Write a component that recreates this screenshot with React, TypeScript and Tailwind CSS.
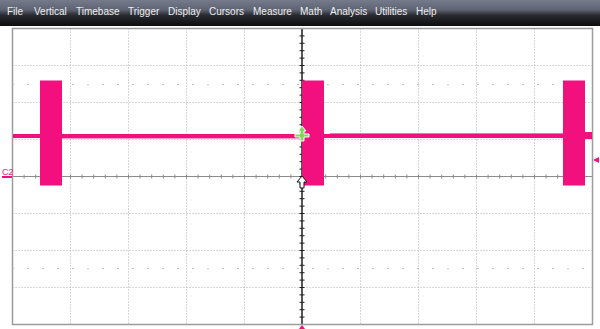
const MENU: [string, number][] = [
  ["File", 27],
  ["Vertical", 42],
  ["Timebase", 52],
  ["Trigger", 40],
  ["Display", 41],
  ["Cursors", 44],
  ["Measure", 47],
  ["Math", 30],
  ["Analysis", 45],
  ["Utilities", 41],
  ["Help", 40],
];

const PINK = "#f2107e";

// graticule: 10 x 8 divisions, 58 x 37 px
const X0 = 12.5;
const Y0 = 28.5;
const DX = 58;
const DY = 37;

function Graticule() {
  const vlines = Array.from({ length: 9 }, (_, i) => X0 + DX * (i + 1)).filter((_, i) => i !== 4);
  const hlines = Array.from({ length: 7 }, (_, i) => Y0 + DY * (i + 1)).filter((_, i) => i !== 3);
  const cx = X0 + DX * 5 - 0.5;
  const cy = Y0 + DY * 4;
  const xticks = Array.from({ length: 51 }, (_, i) => X0 + (DX / 5) * i);
  const yticks = Array.from({ length: 41 }, (_, i) => Y0 + (DY / 5) * i);
  return (
    <g>
      {vlines.map((x) => (
        <line key={"v" + x} x1={x} y1={Y0} x2={x} y2={Y0 + DY * 8} stroke="#b0b0b0" strokeWidth={1} strokeDasharray="1 2" />
      ))}
      {hlines.map((y) => (
        <line key={"h" + y} x1={X0} y1={y} x2={X0 + DX * 10} y2={y} stroke="#b0b0b0" strokeWidth={1} strokeDasharray="1 2" />
      ))}
      {/* faint mid rows */}
      <line x1={X0} y1={84.5} x2={X0 + DX * 10} y2={84.5} stroke="#8a8a8a" strokeWidth={1} strokeDasharray="1 14" />
      <line x1={X0} y1={268.5} x2={X0 + DX * 10} y2={268.5} stroke="#8a8a8a" strokeWidth={1} strokeDasharray="1 14" />

      {/* centre axes */}
      <line x1={X0} y1={cy} x2={X0 + DX * 10} y2={cy} stroke="#8c8c8c" strokeWidth={1} />
      {xticks.map((x) => (
        <line key={"xt" + x} x1={x} y1={cy - 2} x2={x} y2={cy + 2} stroke="#8c8c8c" strokeWidth={1} />
      ))}
      <line x1={cx} y1={Y0} x2={cx} y2={Y0 + DY * 8} stroke="#1e1e1e" strokeWidth={1.5} />
      {yticks.map((y) => (
        <line key={"yt" + y} x1={cx - 2.5} y1={y} x2={cx + 2.5} y2={y} stroke="#1e1e1e" strokeWidth={1} />
      ))}

      {/* frame */}
      <rect x={X0} y={Y0} width={DX * 10} height={DY * 8} fill="none" stroke="#9c9c9c" strokeWidth={1.5} />
    </g>
  );
}

function Trace() {
  const bursts = [40, 302, 563];
  return (
    <g fill={PINK}>
      <rect x={13} y={134} width={579} height={4} />
      {/* slight noise on the baseline */}
      <rect x={330} y={133} width={255} height={1} opacity={0.6} />
      <rect x={62} y={138} width={240} height={1} opacity={0.4} />
      <rect x={585} y={132} width={7} height={7} />
      {bursts.map((x) => (
        <rect key={x} x={x} y={80.5} width={22} height={105} />
      ))}
    </g>
  );
}

function Markers() {
  return (
    <g>
      {/* right-side offset marker */}
      <polygon points="593,160 599,157 599,163" fill={PINK} />
      {/* left channel marker line */}
      <rect x={2} y={176} width={10} height={2} fill={PINK} />
      {/* trigger position */}
      <polygon points="299,329 305,329 302,325" fill={PINK} />
      {/* cursor at trace level */}
      <polygon
        points="302,126 306,131 304,131 304,134 309,134 309,137 304,137 304,141 300,141 300,137 295,137 295,134 300,134 300,131 298,131"
        fill="#7ed957"
        stroke="#ffffff"
        strokeWidth={1}
      />
      {/* cursor on axis */}
      <polygon
        points="302,176 307,182 304,182 304,188 300,188 300,182 297,182"
        fill="#ffffff"
        stroke="#111111"
        strokeWidth={1}
      />
    </g>
  );
}

export default function App() {
  return (
    <div className="flex h-[329px] w-[600px] flex-col overflow-hidden bg-white">
      <div className="flex h-[26px] shrink-0 items-center bg-[linear-gradient(to_bottom,#767b8c_0%,#5e6373_38%,#2a2b31_58%,#0d0d0e_100%)] pb-[3px] pl-[7px] font-['Liberation_Sans',Arial,sans-serif] text-[10px] text-[#eeeeee]">
        {MENU.map(([label, w]) => (
          <span key={label} className="shrink-0 whitespace-nowrap" style={{ width: w }}>
            {label}
          </span>
        ))}
      </div>
      <div className="relative flex-1">
        <svg width={600} height={303} viewBox="0 26 600 303" className="block">
          <Graticule />
          <Trace />
          <Markers />
        </svg>
        <span className="absolute left-[2px] top-[142px] font-['Liberation_Sans',Arial,sans-serif] text-[9px] leading-none text-[#f2107e]">
          C2
        </span>
      </div>
    </div>
  );
}
